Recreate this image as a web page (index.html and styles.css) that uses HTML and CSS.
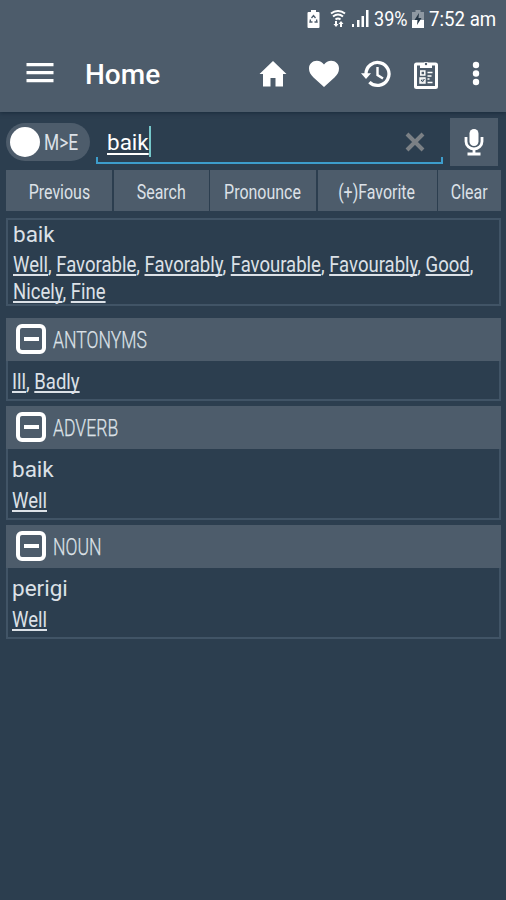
FILE: index.html
```html
<!DOCTYPE html>
<html lang="en">
<head>
<meta charset="utf-8">
<title>Home</title>
<link rel="stylesheet" href="styles.css">
</head>
<body>
<header class="top">
  <div class="status">
    <svg class="recycle" width="13" height="18" viewBox="0 0 13 18"><path fill="#fff" d="M4 0h5v2h2.500q1 0 1 1v14q0 1-1 1h-10q-1 0-1-1V3q0-1 1-1H4z"/><path d="M4.500 8L6.500 5.500 8.500 8M9.500 9.500L10 12H7.500M5.500 12H3L3.500 9.500" fill="none" stroke="#4d5c6b" stroke-width="1.300"/></svg>
    <svg class="wifi" width="16" height="18" viewBox="0 0 16 18"><path d="M1 3.500Q8-1.500 15 3.500M3 6.500Q8 2.500 13 6.500M5.500 9.500Q8 7.500 10.500 9.500" fill="none" stroke="#fff" stroke-width="2"/><path fill="#fff" d="M5 11h2v3h1.500L6 17l-2.500-3H5zM10 17h2v-3h1.500L11 11l-2.500 3H10z"/></svg>
    <svg class="signal" width="17" height="17" viewBox="0 0 17 17"><path fill="#fff" d="M0 14h2v3H0zM5 10h2.500v7H5zM9.500 6H12v11H9.500zM14 0h2.500v17H14z"/></svg>
    <span class="fit pct">39%</span>
    <svg class="battery" width="12" height="18" viewBox="0 0 12 18"><path fill="#8e98a2" d="M3.500 0h5v2H12v8H0V2h3.500z"/><path fill="#fff" d="M0 10h12v8H0z"/><path fill="#263746" d="M7 3L2.500 10H5.500L5 15l4.500-7H6.500z"/></svg>
    <span class="fit time">7:52 am</span>
  </div>
  <nav class="bar">
    <svg class="menu" width="28" height="20" viewBox="0 0 28 20"><path fill="#fff" d="M.5 0h27v3.300H.5zM.5 8h27v3.300H.5zM.5 16h27v3.300H.5z"/></svg>
    <h1>Home</h1>
    <div class="actions">
      <svg width="28" height="26" viewBox="0 0 28 26"><path fill="#fff" d="M14 0l13.500 13H24v12.500h-7.500V17h-5v8.500H4V13H.5z"/></svg>
      <svg width="30" height="28" viewBox="0 0 30 28"><path fill="#fff" d="M15 27L4.500 17.500C1.500 14.500 0 12 0 8.500 0 4 3.500.8 7.800.8c3 0 5.500 1.400 7.200 3.800C16.700 2.200 19.200.8 22.200.8 26.500.8 30 4 30 8.500c0 3.500-1.500 6-4.500 9z"/></svg>
      <svg width="30" height="28" viewBox="0 0 30 28"><path fill="none" stroke="#fff" stroke-width="3.300" d="M5 14a11.500 11.500 0 1 1 3.400 8.100"/><path fill="#fff" d="M0 13.200h10L5 19z"/><path fill="none" stroke="#fff" stroke-width="2.400" d="M16.500 7v8l5.500 3.500"/></svg>
      <svg width="24" height="29" viewBox="0 0 24 29"><rect x="1.500" y="4" width="21" height="23.500" rx="1" fill="none" stroke="#fff" stroke-width="3"/><path fill="#fff" d="M6 8V4h3a3.200 3.200 0 0 1 6 0h3v4z"/><circle cx="12" cy="4" r="1.200" fill="#4d5c6b"/><rect x="6.800" y="11" width="4" height="4" fill="none" stroke="#fff" stroke-width="1.500"/><path d="M6 18h5v5H6zM13.500 12.500h5M13.500 16h4M13.500 19h2M13.500 22.500h5" fill="#c1c8ce" stroke="#fff" stroke-width="1.400"/><path d="M7 20l1.500 1.500L10.500 19" fill="none" stroke="#34495a"/></svg>
      <svg width="8" height="26" viewBox="0 0 8 26"><g fill="#fff"><circle cx="4" cy="4" r="3.200"/><circle cx="4" cy="12.500" r="3.200"/><circle cx="4" cy="21" r="3.200"/></g></svg>
    </div>
  </nav>
</header>
<main>
  <div class="search">
    <div class="toggle"><i class="knob"></i><span class="fit lang">M&gt;E</span></div>
    <div class="field">
      <span class="query">baik</span><i class="caret"></i>
      <svg class="clear" width="20" height="20" viewBox="0 0 20 20"><path d="M2 2l16 16M18 2L2 18" stroke="#7b8085" stroke-width="4"/></svg>
    </div>
    <div class="mic"><svg width="20" height="27" viewBox="0 0 20 27"><rect x="5.500" y="0" width="9" height="17" rx="4.500" fill="#fff"/><path d="M2 8v4.500a8 7.500 0 0 0 16 0V8M10 20v5M3.500 25h13" fill="none" stroke="#fff" stroke-width="2.800"/></svg></div>
  </div>
  <div class="buttons">
    <div><span class="fit">Previous</span></div>
    <div><span class="fit">Search</span></div>
    <div><span class="fit">Pronounce</span></div>
    <div><span class="fit">(+)Favorite</span></div>
    <div><span class="fit">Clear</span></div>
  </div>
  <section class="card result">
    <div class="word">baik</div>
    <p class="links"><u>Well</u>, <u>Favorable</u>, <u>Favorably</u>, <u>Favourable</u>, <u>Favourably</u>, <u>Good</u>,<br><u>Nicely</u>, <u>Fine</u></p>
  </section>
  <section class="card antonyms">
    <h2><i class="minus"></i><span class="fit">ANTONYMS</span></h2>
    <p class="links"><u>Ill</u>, <u>Badly</u></p>
  </section>
  <section class="card entry">
    <h2><i class="minus"></i><span class="fit">ADVERB</span></h2>
    <div class="word">baik</div>
    <p class="links"><u>Well</u></p>
  </section>
  <section class="card entry">
    <h2><i class="minus"></i><span class="fit">NOUN</span></h2>
    <div class="word">perigi</div>
    <p class="links"><u>Well</u></p>
  </section>
</main>
</body>
</html>
```
FILE: styles.css
```css
* { box-sizing: border-box; }
body { margin: 0; width: 506px; height: 900px; overflow: hidden; background: #2c3e4f; color: #dce1e7; font-family: Roboto, sans-serif; }
svg { display: block; flex: none; }
i { display: block; flex: none; }
.fit { display: block; white-space: nowrap; transform: scaleX(.86); }
.top { height: 112px; background: #4d5c6b; box-shadow: 0 1px 4px #1a2a3b; color: #fff; }
.status { height: 38px; display: flex; align-items: center; justify-content: flex-end; padding-right: 10px; font-size: 21px; }
.recycle { margin-right: 10px; margin-top: -1px; }
.wifi { margin-right: 6px; margin-top: -1px; }
.signal { margin-right: 5px; margin-top: -1px; }
.pct { width: 38px; transform-origin: left; transform: scaleX(.86); }
.battery { margin-right: 5px; margin-top: -1px; }
.time { width: 67px; transform-origin: left; transform: scaleX(.89); }
.bar { height: 72px; display: flex; align-items: center; padding: 0 26px; }
.menu { margin-top: -3px; }
h1 { margin: 1px 0 0 31px; font-size: 28px; font-weight: 500; line-height: 34px; }
.actions { margin-left: auto; display: flex; align-items: center; justify-content: space-between; width: 221px; }
.actions svg:nth-child(4) { margin-left: 2px; }
.actions svg:nth-child(5) { margin-left: 12px; }
main { padding: 6px 5px 0 6px; }
.search { display: flex; height: 48px; }
.toggle { width: 84px; height: 38px; margin-top: 5px; border-radius: 19px; background: #4d5c6b; display: flex; align-items: center; padding-left: 4px; }
.knob { width: 30px; height: 30px; border-radius: 50%; background: #fff; }
.lang { margin: 1px 0 0 4px; font-size: 22px; font-weight: 400; transform-origin: left; transform: scaleX(.79); }
.field { width: 347px; height: 46px; margin-left: 6px; display: flex; padding-left: 11px; border-bottom: 2px solid #3d9dcc; background: linear-gradient(#3d9dcc, #3d9dcc) left bottom / 2px 5px no-repeat, linear-gradient(#3d9dcc, #3d9dcc) right bottom / 2px 5px no-repeat; }
.query { font-size: 22.500px; line-height: 49px; color: #fff; text-decoration: underline; text-underline-offset: 3px; text-decoration-thickness: 2px; }
.caret { width: 2px; height: 31px; margin-top: 8px; background: #75c7ca; }
.clear { margin: 14px 18px 0 auto; }
.mic { width: 48px; height: 48px; margin-left: 7px; background: #4d5c6b; display: flex; align-items: center; justify-content: center; }
.buttons { display: grid; grid-template-columns: 106px 95px 106px 119px 1fr; gap: 1.500px; height: 41px; margin-top: 4px; font-size: 21px; font-weight: 400; }
.buttons div { background: #4d5c6b; display: flex; align-items: center; justify-content: center; min-width: 0; padding-top: 2px; }
.buttons .fit { transform: scaleX(.76); }
.card { border: 2px solid #415466; margin-bottom: 5px; }
.word { font-size: 22.500px; line-height: 27px; }
.links { margin: 0; width: 600px; font-size: 22px; line-height: 27px; white-space: nowrap; transform-origin: left; transform: scaleX(.842); }
.links u { text-decoration-thickness: 2px; text-underline-offset: 2px; text-decoration-skip-ink: none; }
.result { height: 88px; margin-top: 7px; margin-bottom: 12px; padding: 1px 0 0 5px; }
.result .links { margin-top: 3px; }
h2 { margin: -2px -2px 0; height: 43px; display: flex; align-items: center; padding-left: 10px; background: #4d5c6b; font-size: 23px; font-weight: 300; }
h2 .fit { margin: 2px 0 0 7px; transform-origin: left; transform: scaleX(.765); -webkit-text-stroke: .25px; }
.minus { width: 30px; height: 30px; margin-top: -1px; border: 4px solid #fff; border-radius: 6px; background: linear-gradient(#fff, #fff) center / 15px 4px no-repeat; }
.antonyms { height: 83px; }
.antonyms .links { margin: 7px 0 0 4px; }
.entry { height: 114px; }
.entry .word { margin: 7px 0 0 4px; }
.entry .links { margin: 4px 0 0 4px; }
```
